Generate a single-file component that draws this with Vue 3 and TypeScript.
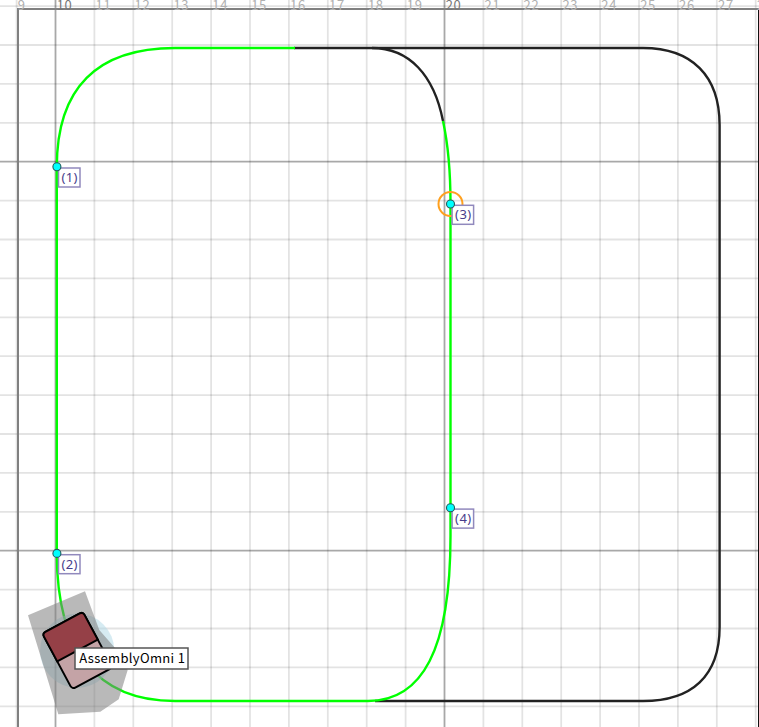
<script setup lang="ts">
interface Waypoint {
  id: number
  x: number
  y: number
}

const cell = 38.9
const columns = Array.from({ length: 20 }, (_, i) => ({
  value: i + 9,
  x: 55.5 + (i - 1) * cell,
  major: (i + 9) % 10 === 0,
}))
const rows = Array.from({ length: 19 }, (_, i) => ({
  y: 6.1 + i * cell,
  major: i % 10 === 4,
}))
const waypoints: Waypoint[] = [
  { id: 1, x: 56.9, y: 166.7 },
  { id: 2, x: 56.9, y: 553.4 },
  { id: 3, x: 450.5, y: 204 },
  { id: 4, x: 450.5, y: 507.8 },
]
</script>

<template>
  <svg class="map" width="759" height="727" viewBox="0 0 759 727">
    <g>
      <line v-for="c in columns" :key="c.value" :x1="c.x" :x2="c.x" y1="0" y2="727" :class="c.major ? 'major' : 'minor'" />
      <line v-for="r in rows" :key="r.y" x1="0" x2="759" :y1="r.y" :y2="r.y" :class="r.major ? 'major' : 'minor'" />
    </g>
    <path class="frame" d="M18 727V9H759" />
    <path class="edge" d="M758.5 10V727" />
    <g class="ruler">
      <text v-for="c in columns" :key="c.value" :x="c.x + 1.2" y="10.4" :class="{ strong: c.major }">{{ c.value }}</text>
    </g>

    <path class="track" d="M294 48H643C692 48 719.6 76 719.6 125V627C719.6 676 692 701 643 701H375" />
    <path class="track" d="M372 48C409 48 434 75 443 121" />
    <path class="route" d="M295 48H175C97 48 56.8 88 56.8 167V553C56.8 651 97 701 175 701H368C422 701 450.5 650 450.5 536V204C450.5 172 448 144 443 121" />

    <circle class="halo" cx="77.2" cy="650.7" r="37.2" />
    <polygon class="footprint" points="28,615.3 85,591.3 99.3,630 115,648 127.7,670 118.7,699.3 100.3,711.7 58.3,714.3" />
    <g transform="translate(77.5 650.5) rotate(-28.2)">
      <rect class="body" x="-23" y="-31.6" width="46" height="63.2" rx="3.5" />
      <path class="cab" d="M-23 0V-28.1Q-23 -31.6 -19.5 -31.6H19.5Q23 -31.6 23 -28.1V0Z" />
    </g>

    <circle class="selection" cx="450.5" cy="204" r="12" />
    <g v-for="p in waypoints" :key="p.id" :transform="`translate(${p.x} ${p.y})`">
      <rect class="tag" x="1.6" y="1.3" width="21.5" height="19" />
      <circle class="dot" r="4" />
      <text class="tag-text" x="12.8" y="15.4">({{ p.id }})</text>
    </g>

    <rect class="tip" x="75" y="648" width="113" height="21" />
    <text class="tip-text" x="79.2" y="663.4">AssemblyOmni 1</text>
  </svg>
</template>

<style>
body {
  background: #fff;
  overflow: hidden;
}
</style>

<style scoped>
.map {
  display: block;
  font-family: "Noto Sans", sans-serif;
}
.minor {
  stroke: rgba(0, 0, 0, 0.11);
  stroke-width: 1.8;
}
.major {
  stroke: rgba(0, 0, 0, 0.34);
  stroke-width: 1.8;
}
.ruler {
  font-family: "Noto Sans CJK SC", sans-serif;
  font-size: 13px;
  letter-spacing: 0.7px;
  fill: #b0b0b0;
}
.ruler .strong {
  fill: #777;
}
.frame {
  fill: none;
  stroke: #808080;
  stroke-width: 2;
}
.edge {
  stroke: #111;
  stroke-width: 1;
}
.track {
  fill: none;
  stroke: #222;
  stroke-width: 2.4;
}
.route {
  fill: none;
  stroke: #0f0;
  stroke-width: 2.4;
}
.halo {
  fill: rgba(173, 216, 230, 0.5);
}
.footprint {
  fill: rgba(128, 128, 128, 0.55);
}
.body {
  fill: #c4a3a6;
  stroke: #000;
  stroke-width: 2;
}
.cab {
  fill: #954047;
  stroke: #000;
  stroke-width: 2;
}
.selection {
  fill: none;
  stroke: #ffa01e;
  stroke-width: 2;
}
.tag {
  fill: #fff;
  stroke: #9189bd;
  stroke-width: 1.5;
}
.dot {
  fill: #0ff;
  stroke: #245c5c;
  stroke-width: 1.1;
}
.tag-text {
  font-size: 13px;
  letter-spacing: 0.4px;
  fill: #483d8b;
  text-anchor: middle;
}
.tip {
  fill: #fff;
  stroke: #555;
  stroke-width: 1.5;
}
.tip-text {
  font-family: "Noto Sans CJK SC", sans-serif;
  font-size: 13px;
  letter-spacing: 0.33px;
  fill: #000;
}
</style>
